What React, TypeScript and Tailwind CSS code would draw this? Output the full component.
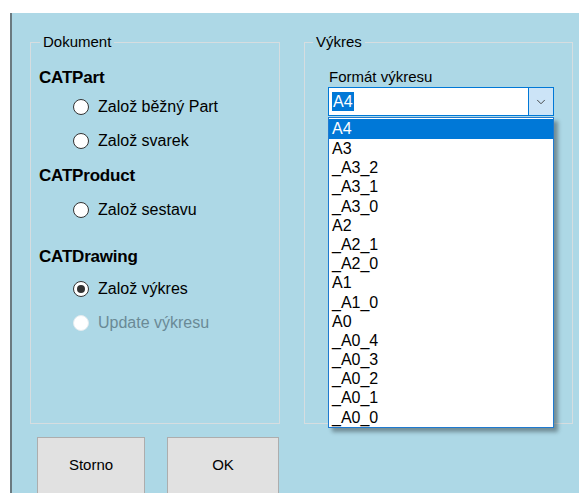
import { ChevronDown } from "lucide-react";

const formats = [
  "A4",
  "A3",
  "_A3_2",
  "_A3_1",
  "_A3_0",
  "A2",
  "_A2_1",
  "_A2_0",
  "A1",
  "_A1_0",
  "A0",
  "_A0_4",
  "_A0_3",
  "_A0_2",
  "_A0_1",
  "_A0_0",
];

function Radio({
  label,
  checked = false,
  disabled = false,
  className = "",
}: {
  label: string;
  checked?: boolean;
  disabled?: boolean;
  className?: string;
}) {
  return (
    <label className={`flex h-[24px] items-center pl-[34px] ${className}`}>
      <span
        className={`flex h-[16px] w-[16px] items-center justify-center rounded-full border bg-white ${
          disabled ? "border-[#e4ecef]" : "border-[#333333]"
        }`}
      >
        {checked && <span className="h-[8px] w-[8px] rounded-full bg-[#333333]" />}
      </span>
      <span
        className={`ml-[9px] text-[16px] ${disabled ? "text-[#6a8a96]" : "text-black"}`}
      >
        {label}
      </span>
    </label>
  );
}

function Heading({ children, className = "" }: { children: string; className?: string }) {
  return (
    <div className={`flex h-[24px] items-center text-[17px] font-bold tracking-[-0.2px] ${className}`}>
      {children}
    </div>
  );
}

export default function App() {
  return (
    <div className="h-[493px] w-[579px] overflow-hidden bg-white pl-[10px] pt-[13px] font-['Liberation_Sans',Arial,sans-serif] text-black">
      <div className="h-full border-l-2 border-[#6b7a80] bg-[#add8e6] pl-[18px] pt-[20px]">
        <div className="flex">
          {/* Dokument */}
          <fieldset className="h-[391px] w-[250px] border border-[#d6dde0] px-[8px]">
            <legend className="ml-[1px] px-[3px] text-[15px] leading-[18px]">Dokument</legend>
            <Heading className="mt-[15px]">CATPart</Heading>
            <Radio className="mt-[5px]" label="Založ běžný Part" />
            <Radio className="mt-[10px]" label="Založ svarek" />
            <Heading className="mt-[11px]">CATProduct</Heading>
            <Radio className="mt-[10px]" label="Založ sestavu" />
            <Heading className="mt-[23px]">CATDrawing</Heading>
            <Radio className="mt-[8px]" label="Založ výkres" checked />
            <Radio className="mt-[10px]" label="Update výkresu" disabled />
          </fieldset>

          {/* Výkres */}
          <fieldset className="relative ml-[24px] h-[391px] w-[269px] border border-[#d6dde0] px-[8px]">
            <legend className="px-[3px] text-[15px] leading-[18px]">Výkres</legend>
            <div className="ml-[16px] mt-[17px] text-[15px] leading-[18px]">Formát výkresu</div>
            <div className="ml-[15px] mt-[1px] flex h-[29px] w-[226px] border border-[#0078d7] bg-white">
              <div className="flex flex-1 items-center pl-[3px]">
                <span className="bg-[#0078d7] px-[1px] text-[16px] leading-[19px] text-white">A4</span>
              </div>
              <div className="flex w-[25px] items-center justify-center border-l border-[#0078d7] bg-[#cce4f7]">
                <ChevronDown size={14} strokeWidth={1.5} className="text-[#333333]" />
              </div>
            </div>

            {/* open list of the combo */}
            <div className="absolute left-[23px] top-[66px] h-[311px] w-[226px] overflow-hidden border border-[#1f7ad0] bg-white shadow-[4px_4px_4px_rgba(0,0,0,0.35)]">
              {formats.map((f, i) => (
                <div
                  key={f}
                  className={`pl-[3px] text-[16px] ${
                    i === 0 ? "mt-[1px] h-[20px] bg-[#0078d7] leading-[20px] text-white" : "h-[19.2px] leading-[19px]"
                  }`}
                >
                  {f}
                </div>
              ))}
            </div>
          </fieldset>
        </div>

        <div className="mt-[13px] flex pl-[7px]">
          <button className="h-[60px] w-[108px] border border-[#adadad] bg-[#e1e1e1] pb-[3px] text-[15px]">
            Storno
          </button>
          <button className="ml-[22px] h-[60px] w-[112px] border border-[#adadad] bg-[#e1e1e1] pb-[3px] text-[15px]">
            OK
          </button>
        </div>
      </div>
    </div>
  );
}
